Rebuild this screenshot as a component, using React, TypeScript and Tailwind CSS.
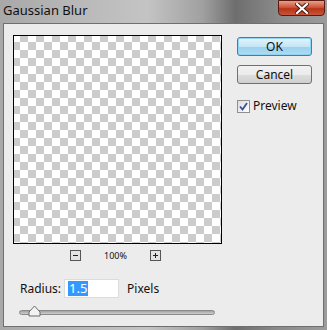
import React from "react";

const font = { fontFamily: '"Noto Sans", "Open Sans", "DejaVu Sans", sans-serif' };

export default function App() {
  return (
    <div
      className="w-[327px] h-[330px] overflow-hidden flex flex-col bg-[linear-gradient(90deg,#a8a8a8_0%,#b9b9b9_25%,#c4c4c4_45%,#a0a0a0_62%,#6e6e6e_72%,#8a8a8a_85%,#9c9c9c_100%)]"
      style={font}
    >
      {/* Title bar */}
      <div className="h-[23px] flex items-start justify-between">
        <div className="pl-[3px] pt-[2px] text-[13px] leading-[16px] text-[#111]">Gaussian Blur</div>
        <div className="mr-[2px] w-[47px] h-[16px] rounded-b-[4px] border border-[#5a1a10] bg-[linear-gradient(180deg,#e4a08c_0%,#d0553a_45%,#b73417_55%,#c9553a_100%)] flex items-center justify-center">
          <svg width="14" height="11" viewBox="0 0 14 11">
            <path d="M2 1 L12 10 M12 1 L2 10" stroke="#3a1a14" strokeWidth="4" strokeLinecap="square" />
            <path d="M2 1 L12 10 M12 1 L2 10" stroke="#ffffff" strokeWidth="2.2" strokeLinecap="square" />
          </svg>
        </div>
      </div>
      {/* Panel */}
      <div className="mx-[3px] h-[304px] border border-[#6f6f6f] bg-[#ececec] flex">
        <div className="pl-[9px] pt-[11px] flex flex-col">
          <div className="w-[209px] h-[209px] border border-black bg-white bg-[conic-gradient(#cccccc_25%,#ffffff_0_50%,#cccccc_0_75%,#ffffff_0)] bg-[length:16px_16px] bg-[position:-2px_-2px]" />
          <div className="h-[14px] mt-[4px] flex items-center">
            <div className="ml-[57px] w-[11px] h-[11px] border border-[#555] bg-[#e4e4e4] flex items-center justify-center">
              <div className="w-[5px] h-[1px] bg-[#222]" />
            </div>
            <div className="ml-[23px] text-[9px] leading-[11px] text-[#111]">100%</div>
            <div className="ml-[23px] w-[11px] h-[11px] border border-[#555] bg-[#e4e4e4] relative">
              <div className="absolute left-[2px] top-[4px] w-[5px] h-[1px] bg-[#222]" />
              <div className="absolute left-[4px] top-[2px] w-[1px] h-[5px] bg-[#222]" />
            </div>
          </div>
          <div className="mt-[17px] flex items-center">
            <div className="ml-[7px] text-[12px] text-[#111]">Radius:</div>
            <div className="ml-[3px] w-[55px] h-[19px] bg-white border border-[#dcdcdc] flex items-center pl-[3px]">
              <span className="bg-[#3399ff] text-white text-[13px] leading-[15px] px-[1px]">1.5</span>
            </div>
            <div className="ml-[8px] text-[12px] text-[#111]">Pixels</div>
          </div>
          <div className="mt-[7px] ml-[6px] relative w-[196px] h-[12px]">
            <div className="absolute left-0 right-0 top-[5px] h-[5px] rounded-full border border-[#8a8a8a] bg-[linear-gradient(180deg,#a0a0a0,#cfcfcf)]" />
            <svg className="absolute left-[9px] top-0" width="13" height="12" viewBox="0 0 13 12">
              <path d="M1 11 L1 7 L6.5 1 L12 7 L12 11 Z" fill="#f2f2f2" stroke="#6a6a6a" />
            </svg>
          </div>
        </div>
        <div className="ml-[15px] pt-[13px] flex flex-col">
          <div className="w-[75px] h-[19px] rounded-[3px] border border-[#3c7fb1] bg-[linear-gradient(180deg,#e5f4fc_0%,#c4e5f6_50%,#98d1ef_51%,#b1dbef_100%)] shadow-[inset_0_0_0_1px_#8fd3f5] flex items-center justify-center text-[12px] text-[#111]">
            OK
          </div>
          <div className="mt-[9px] w-[75px] h-[19px] rounded-[3px] border border-[#707070] bg-[linear-gradient(180deg,#f2f2f2_0%,#ebebeb_50%,#dddddd_51%,#cfcfcf_100%)] flex items-center justify-center text-[12px] text-[#111]">
            Cancel
          </div>
          <div className="mt-[13px] flex items-center">
            <div className="w-[13px] h-[13px] border border-[#8e8f8f] bg-[linear-gradient(135deg,#dcdcdc,#ffffff)] flex items-center justify-center">
              <svg width="9" height="9" viewBox="0 0 9 9">
                <path d="M1 4.5 L3.5 7.5 L8 1" fill="none" stroke="#3a4f9a" strokeWidth="1.8" />
              </svg>
            </div>
            <div className="ml-[3px] text-[12px] text-[#111]">Preview</div>
          </div>
        </div>
      </div>
    </div>
  );
}
